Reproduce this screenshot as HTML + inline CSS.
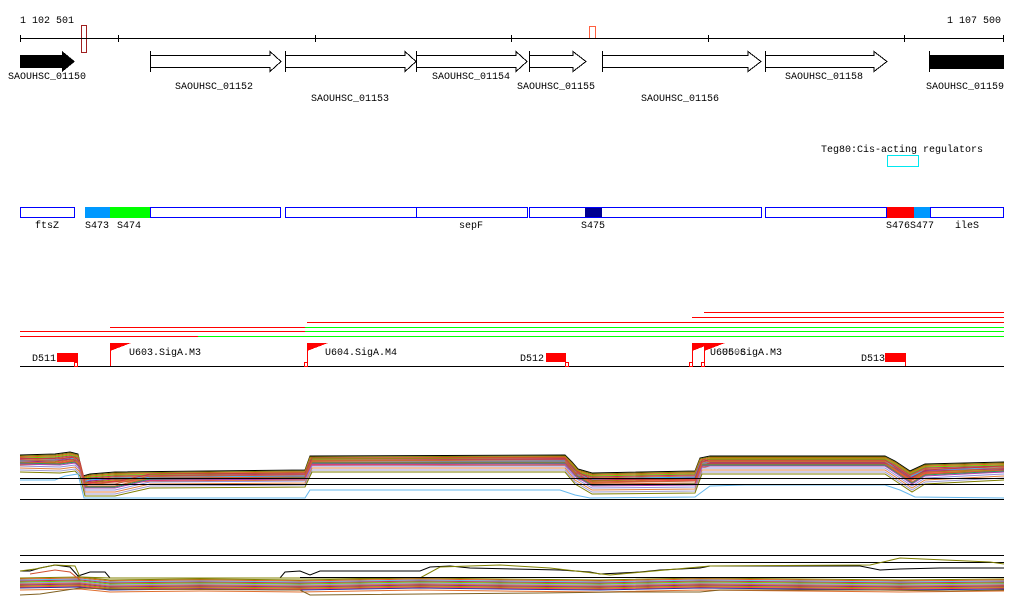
<!DOCTYPE html>
<html><head><meta charset="utf-8"><style>
html,body{margin:0;padding:0;background:#fff;width:1024px;height:611px;overflow:hidden}
svg{display:block}
text{font-family:"Liberation Mono","DejaVu Sans Mono",monospace;font-size:10px;fill:#000}
</style></head><body>
<svg width="1024" height="611" viewBox="0 0 1024 611" xmlns="http://www.w3.org/2000/svg" shape-rendering="crispEdges">
<defs>
<path id="pa" fill="none" d="M20,455 L55,454 L70,452 L78,454 L83,476 L90,474 L115,472 L305,470 L310,456 L565,455 L572,462 L578,469 L592,473 L695,471 L700,458 L710,456 L885,456 L895,461 L910,471 L925,464 L1004,462"/>
<path id="pc" fill="none" d="M20,466 L60,467 L75,465 L80,470 L85,490 L115,490 L150,482 L305,481 L312,466 L565,466 L575,478 L592,488 L695,487 L702,468 L885,468 L900,478 L912,486 L925,478 L1004,474"/>
<path id="pb" fill="none" d="M20,578 L80,577 L110,580 L200,579 L300,580 L420,578 L500,579 L600,580 L700,578 L800,579 L900,580 L1004,579"/>
</defs>
<!-- axis -->
<text x="20" y="23">1 102 501</text>
<text x="947" y="23">1 107 500</text>
<g stroke="#000" stroke-width="1">
<line x1="20" y1="38.5" x2="1004" y2="38.5"/>
<line x1="20.5" y1="35" x2="20.5" y2="42"/>
<line x1="118.5" y1="35" x2="118.5" y2="42"/>
<line x1="315.5" y1="35" x2="315.5" y2="42"/>
<line x1="511.5" y1="35" x2="511.5" y2="42"/>
<line x1="708.5" y1="35" x2="708.5" y2="42"/>
<line x1="904.5" y1="35" x2="904.5" y2="42"/>
<line x1="1003.5" y1="35" x2="1003.5" y2="42"/>
</g>
<rect x="81.5" y="25.5" width="5" height="27" fill="none" stroke="#a02020"/>
<rect x="589.5" y="26.5" width="6" height="12" fill="#fff" stroke="#ff6040"/>
<line x1="20" y1="38.5" x2="1004" y2="38.5" stroke="#000"/>
<!-- genes -->
<polygon points="20,55 62,55 62,51 75,61.5 62,72 62,68 20,68" fill="#000"/>
<g fill="#fff" stroke="#000" stroke-width="1">
<polygon points="150.5,55.5 270,55.5 270,51.5 281,61.5 270,71.5 270,67.5 150.5,67.5"/>
<polygon points="285.5,55.5 405,55.5 405,51.5 416,61.5 405,71.5 405,67.5 285.5,67.5"/>
<polygon points="416.5,55.5 516,55.5 516,51.5 527,61.5 516,71.5 516,67.5 416.5,67.5"/>
<polygon points="529.5,55.5 573,55.5 573,51.5 586,61.5 573,71.5 573,67.5 529.5,67.5"/>
<polygon points="602.5,55.5 748,55.5 748,51.5 761,61.5 748,71.5 748,67.5 602.5,67.5"/>
<polygon points="765.5,55.5 874,55.5 874,51.5 887,61.5 874,71.5 874,67.5 765.5,67.5"/>
<line x1="150.5" y1="51" x2="150.5" y2="72"/><line x1="285.5" y1="51" x2="285.5" y2="72"/>
<line x1="416.5" y1="51" x2="416.5" y2="72"/><line x1="529.5" y1="51" x2="529.5" y2="72"/>
<line x1="602.5" y1="51" x2="602.5" y2="72"/><line x1="765.5" y1="51" x2="765.5" y2="72"/>
<line x1="929.5" y1="51" x2="929.5" y2="72"/>
</g>
<rect x="930" y="55" width="74" height="14" fill="#000"/>
<text x="8" y="79">SAOUHSC_01150</text>
<text x="175" y="89">SAOUHSC_01152</text>
<text x="311" y="101">SAOUHSC_01153</text>
<text x="432" y="79">SAOUHSC_01154</text>
<text x="517" y="89">SAOUHSC_01155</text>
<text x="641" y="101">SAOUHSC_01156</text>
<text x="785" y="79">SAOUHSC_01158</text>
<text x="926" y="89">SAOUHSC_01159</text>
<!-- Teg80 -->
<text x="821" y="152">Teg80:Cis-acting regulators</text>
<rect x="887.5" y="155.5" width="31" height="11" fill="none" stroke="#00e8f0"/>
<!-- regions -->
<rect x="85" y="207" width="25" height="11" fill="#0099ff"/>
<rect x="110" y="207" width="40" height="11" fill="#00ff00"/>
<rect x="585" y="207" width="17" height="11" fill="#000090"/>
<rect x="886" y="207" width="28" height="11" fill="#ff0000"/>
<rect x="914" y="207" width="16" height="11" fill="#0099ff"/>
<g fill="none" stroke="#0000ff">
<rect x="20.5" y="207.5" width="54" height="10"/>
<rect x="150.5" y="207.5" width="130" height="10"/>
<rect x="285.5" y="207.5" width="131" height="10"/>
<rect x="416.5" y="207.5" width="111" height="10"/>
<rect x="529.5" y="207.5" width="232" height="10"/>
<rect x="765.5" y="207.5" width="121" height="10"/>
<rect x="930.5" y="207.5" width="73" height="10"/>
</g>
<text x="35" y="228">ftsZ</text>
<text x="85" y="228">S473</text>
<text x="117" y="228">S474</text>
<text x="459" y="228">sepF</text>
<text x="581" y="228">S475</text>
<text x="886" y="228">S476</text>
<text x="910" y="228">S477</text>
<text x="955" y="228">ileS</text>
<!-- lines -->
<g stroke-width="1">
<line x1="704" y1="312.5" x2="1004" y2="312.5" stroke="#ff0000"/>
<line x1="692" y1="317.5" x2="1004" y2="317.5" stroke="#ff0000"/>
<line x1="307" y1="322.5" x2="1004" y2="322.5" stroke="#ff0000"/>
<line x1="110" y1="327.5" x2="305" y2="327.5" stroke="#ff0000"/>
<line x1="305" y1="327.5" x2="1004" y2="327.5" stroke="#00ff00"/>
<line x1="20" y1="331.5" x2="305" y2="331.5" stroke="#ff0000"/>
<line x1="305" y1="331.5" x2="1004" y2="331.5" stroke="#00ff00"/>
<line x1="20" y1="336.5" x2="198" y2="336.5" stroke="#ff0000"/>
<line x1="198" y1="336.5" x2="1004" y2="336.5" stroke="#00ff00"/>
<line x1="20" y1="366.5" x2="1004" y2="366.5" stroke="#000"/>
</g>
<!-- flags -->
<text x="32" y="361">D511</text>
<rect x="57" y="353" width="21" height="9" fill="#f00"/>
<rect x="74.5" y="362.5" width="3" height="4" fill="#fff" stroke="#f00"/>
<g fill="#f00">
<rect x="110" y="343" width="1" height="23"/><polygon points="110,343 131,343 110,351"/>
<rect x="307" y="343" width="1" height="23"/><polygon points="307,343 328,343 307,351"/>
<rect x="692" y="343" width="1" height="23"/><polygon points="692,343 713,343 692,351"/>
<rect x="704" y="343" width="1" height="23"/><polygon points="704,343 725,343 704,351"/>
</g>
<rect x="304.5" y="362.5" width="3" height="4" fill="#fff" stroke="#f00"/>
<rect x="689.5" y="362.5" width="3" height="4" fill="#fff" stroke="#f00"/>
<rect x="701.5" y="362.5" width="3" height="4" fill="#fff" stroke="#f00"/>
<text x="129" y="355">U603.SigA.M3</text>
<text x="325" y="355">U604.SigA.M4</text>
<text x="710" y="355">U605.SigA.M3</text>
<text x="722" y="355" fill-opacity="0.7">U606</text>
<text x="520" y="361">D512</text>
<rect x="546" y="353" width="20" height="9" fill="#f00"/>
<rect x="565.5" y="362.5" width="3" height="4" fill="#fff" stroke="#f00"/>
<text x="861" y="361">D513</text>
<rect x="885" y="353" width="21" height="9" fill="#f00"/>
<line x1="905.5" y1="361" x2="905.5" y2="366" stroke="#f00"/>
<!-- upper plot -->
<g shape-rendering="auto" stroke-width="1">
<use href="#pa" stroke="#000"/>
<use href="#pa" stroke="#808000" transform="translate(0,1)"/>
<use href="#pa" stroke="#e06020" transform="translate(0,2)"/>
<use href="#pa" stroke="#66cc00" transform="translate(0,3)"/>
<use href="#pa" stroke="#c03060" transform="translate(0,4)"/>
<use href="#pa" stroke="#d07030" transform="translate(0,5)"/>
<use href="#pa" stroke="#33aaff" transform="translate(0,6)"/>
<use href="#pa" stroke="#a02080" transform="translate(0,7)"/>
<use href="#pa" stroke="#999900" transform="translate(0,8)"/>
<use href="#pa" stroke="#ff4040" transform="translate(0,9)"/>
<use href="#pa" stroke="#e07030" transform="translate(0,10)"/>
<use href="#pc" stroke="#9090e0"/>
<use href="#pc" stroke="#20a060" transform="translate(0,-3)"/>
<use href="#pc" stroke="#c06040" transform="translate(0,-6)"/>
<use href="#pc" stroke="#b040b0" transform="translate(0,-2)"/>
<use href="#pc" stroke="#e08040" transform="translate(0,2)"/>
<use href="#pc" stroke="#a09ad0" transform="translate(0,4)"/>
<use href="#pc" stroke="#c04040" transform="translate(0,-8)"/>
<use href="#pc" stroke="#808000" transform="translate(0,6)"/>
<use href="#pc" stroke="#d06030" transform="translate(0,-4)"/>
<polyline fill="none" stroke="#66b8ee" points="20,480 55,480 65,476 78,474 84,498 305,498 310,490 560,490 575,495 590,498 695,497 710,486 745,485 885,485 900,490 915,497 1004,498"/>
</g>
<g stroke="#000"><line x1="20" y1="478.5" x2="1004" y2="478.5"/><line x1="20" y1="484.5" x2="1004" y2="484.5"/><line x1="20" y1="499.5" x2="1004" y2="499.5"/></g>
<!-- lower plot -->
<g stroke="#000"><line x1="20" y1="555.5" x2="1004" y2="555.5"/><line x1="20" y1="562.5" x2="1004" y2="562.5"/></g>
<g shape-rendering="auto" stroke-width="1">
<use href="#pb" stroke="#808000"/>
<use href="#pb" stroke="#e06020" transform="translate(0,1)"/>
<use href="#pb" stroke="#66b8ee" transform="translate(0,2)"/>
<use href="#pb" stroke="#c03060" transform="translate(0,3)"/>
<use href="#pb" stroke="#66cc00" transform="translate(0,4)"/>
<use href="#pb" stroke="#9090e0" transform="translate(0,5)"/>
<use href="#pb" stroke="#d07030" transform="translate(0,6)"/>
<use href="#pb" stroke="#a02080" transform="translate(0,7)"/>
<use href="#pb" stroke="#999900" transform="translate(0,8)"/>
<use href="#pb" stroke="#ff4040" transform="translate(0,9)"/>
<use href="#pb" stroke="#2030a0" transform="translate(0,10)"/>
<use href="#pb" stroke="#e07030" transform="translate(0,12)"/>
<polyline fill="none" stroke="#000" points="20,571 30,571 40,568 55,565 70,567 78,576 90,572 105,572 110,578 280,578 285,572 300,571 310,575 320,571 420,571 430,567 450,566 470,568 560,570 590,572 600,574 640,572 660,570 700,568 710,566 860,566 880,570 900,569 940,568 1004,568"/>
<polyline fill="none" stroke="#808000" points="20,571 35,569 55,565 75,566 80,577 110,578 420,578 440,567 500,565 550,568 610,575 710,566 870,565 900,558 990,562 1004,564"/>
<polyline fill="none" stroke="#806020" points="20,595 40,594 60,591 80,588 110,589 300,590 310,595 540,593 620,592 700,592 720,590 880,590 950,591 1004,590"/>
<polyline fill="none" stroke="#d05030" points="30,574 55,570 70,572 80,580"/>
</g>
<line x1="300" y1="577.5" x2="1004" y2="577.5" stroke="#000"/>
</svg>
</body></html>
